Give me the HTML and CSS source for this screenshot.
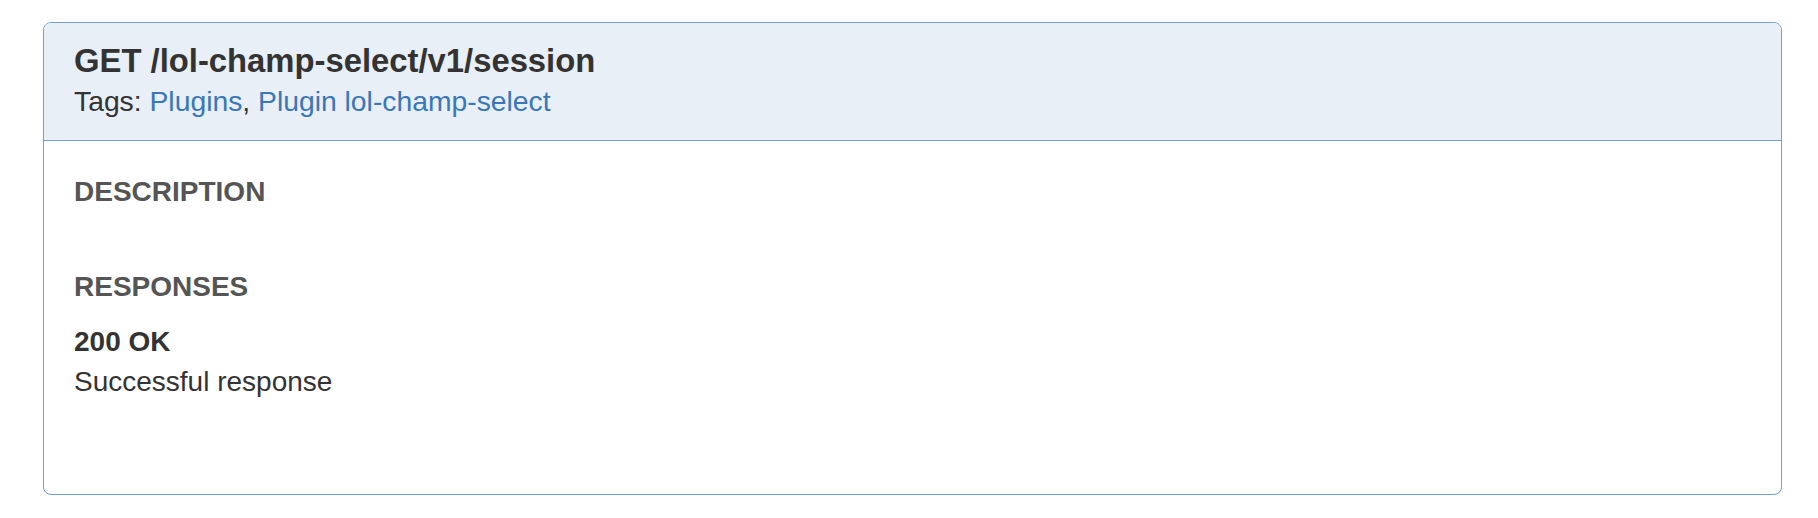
FILE: index.html
```html
<!DOCTYPE html>
<html lang="en">
<head>
<meta charset="utf-8">
<title>GET /lol-champ-select/v1/session</title>
<link rel="stylesheet" href="styles.css">
</head>
<body>
<div class="page">
  <section class="panel">
    <header class="panel-heading">
      <h2 class="endpoint">GET /lol-champ-select/v1/session</h2>
      <div class="tags">Tags: <a href="#">Plugins</a>, <a href="#">Plugin lol-champ-select</a></div>
    </header>
    <div class="panel-body">
      <h3 class="section-title desc">DESCRIPTION</h3>
      <h3 class="section-title resp">RESPONSES</h3>
      <div class="response">
        <div class="status">200 OK</div>
        <div class="status-desc">Successful response</div>
      </div>
    </div>
  </section>
</div>
</body>
</html>
```

FILE: styles.css
```css
html, body {
  margin: 0;
  padding: 0;
  background: #ffffff;
}

body {
  font-family: "Liberation Sans", Arial, Helvetica, sans-serif;
  color: #333333;
}

.page {
  padding: 22px 36px 0 43px;
}

.panel {
  border: 1px solid #74a0cd;
  border-radius: 8px;
  box-shadow: 0 2px 2px rgba(0, 0, 0, 0.05);
  height: 473px;
  box-sizing: border-box;
  overflow: hidden;
  background: #ffffff;
}

.panel-heading {
  background: #e8eff7;
  border-bottom: 1px solid #74a0cd;
  padding: 20px 30px 19px 30px;
}

.endpoint {
  margin: 0 0 2px 0;
  font-size: 32.8px;
  line-height: 36px;
  font-weight: bold;
  color: #333333;
}

.tags {
  font-size: 28.3px;
  line-height: 40px;
  color: #333333;
}

.tags a {
  color: #3a77b6;
  text-decoration: none;
}

.panel-body {
  padding: 35px 30px 30px 30px;
}

.section-title {
  margin: 0;
  font-size: 28px;
  line-height: 31px;
  font-weight: bold;
  color: #555555;
}

.section-title.resp {
  margin-top: 64px;
}

.response {
  margin-top: 24px;
}

.status {
  font-size: 28px;
  line-height: 31px;
  font-weight: bold;
  color: #333333;
}

.status-desc {
  margin-top: 5px;
  font-size: 28px;
  line-height: 40px;
  color: #333333;
}
```
